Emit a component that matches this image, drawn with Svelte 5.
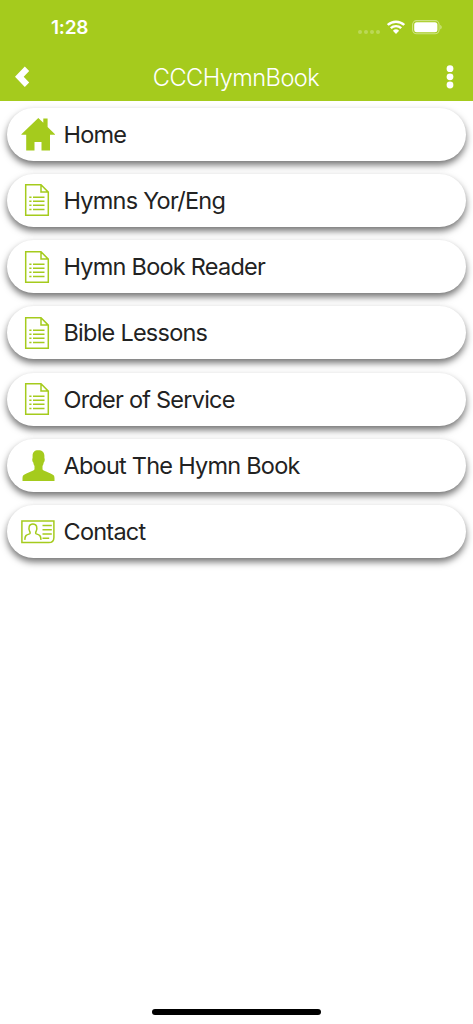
<script>
	const items = [
		{ label: 'Home', icon: 'home' },
		{ label: 'Hymns Yor/Eng', icon: 'paper' },
		{ label: 'Hymn Book Reader', icon: 'paper' },
		{ label: 'Bible Lessons', icon: 'paper' },
		{ label: 'Order of Service', icon: 'paper' },
		{ label: 'About The Hymn Book', icon: 'person' },
		{ label: 'Contact', icon: 'card' }
	];
</script>

<div class="screen">
	<header>
		<div class="status">
			<span class="time">1:28</span>
			<div class="indicators">
				<svg class="signal" width="22" height="16" viewBox="0 0 22 16">
					<circle cx="2" cy="12" r="2" />
					<circle cx="8" cy="12" r="2" />
					<circle cx="14" cy="12" r="2" />
					<circle cx="20" cy="12" r="2" />
				</svg>
				<svg class="wifi" width="18" height="16" viewBox="0 0 18 16">
					<path d="M.8 6a11.8 11.8 0 0 1 16.4 0M3.8 9.2a7.5 7.5 0 0 1 10.4 0" />
					<path class="solid" d="M5.9 11.7a4.5 4.5 0 0 1 6.2 0L9 14.9z" />
				</svg>
				<svg class="battery" width="30" height="16" viewBox="0 0 30 16">
					<rect class="shell" x=".6" y="1.6" width="26.5" height="13.2" rx="4" />
					<rect x="2.2" y="3.2" width="23.2" height="10" rx="2.5" />
					<path class="tip" d="M28.3 6c1.8.7 1.8 3.7 0 4.4z" />
				</svg>
			</div>
		</div>
		<nav>
			<button aria-label="Back">
				<svg width="15" height="22" viewBox="0 0 15 22">
					<path d="M9.800.5L14.200 4.900 8.700 10.700l5.500 5.800-4.400 4.400L0 10.700z" />
				</svg>
			</button>
			<h1>CCCHymnBook</h1>
			<button aria-label="More">
				<svg width="8" height="24" viewBox="0 0 8 24">
					<circle cx="4" cy="3.700" r="3.400" />
					<circle cx="4" cy="11.800" r="3.400" />
					<circle cx="4" cy="20" r="3.400" />
				</svg>
			</button>
		</nav>
	</header>

	<ul>
		{#each items as item}
			<li>
				<svg class="icon" width="34" height="34" viewBox="0 0 34 34">
					{#if item.icon === 'home'}
						<path d="M17.3 1L22.3 5.8V1.5h4.300v8.400L34 17.300v.5h-5V33.500h-8.500V25h-7v8.500H5.200V17.800H.4v-.5z" />
					{:else if item.icon === 'paper'}
						<path class="line" d="M4.7 1.8h15.300l7.300 7.300v23.200H4.700zM20 1.800v7.300h7.300" />
						<path class="line" d="M8.300 14.200h2.200m1.500 0h11.500M8.300 18.300h2.200m1.500 0h11.500M8.300 22.300h2.200m1.500 0h11.500M8.300 26.400h2.200m1.500 0h11.500" />
					{:else if item.icon === 'person'}
						<path d="M17.300 1.200c3.900 0 6.100 2 6.100 5.500v2.200c.7.700.3 4.100-.7 4.700-.3 1.800-.7 2.700-1.200 3.500v3c0 1.100 1.200 1.600 3 2.200l5.100 2.200c2.900 1.200 3.900 2.200 3.900 4.700V32H1.500v-2.800c0-2.500 1-3.500 3.900-4.700l5.100-2.200c1.800-.6 3-1.100 3-2.200v-3c-.5-.8-.9-1.700-1.200-3.500-1-.6-1.400-4-.7-4.700V6.700c0-3.500 1.800-5.500 5.700-5.500z" />
					{:else}
						<path class="line" d="M.9 6h32v16.400c0 3.300-1.900 5.200-5.200 5.200H.9z" />
						<path class="line" d="M3.800 24.900c.2-4.500 1.300-4.900 4.700-6 .8-.4.800-1.400.2-2.400C7.200 12.800 7.900 9 11.900 9s4.700 3.800 3.200 7.500c-.6 1-.6 2 .2 2.400 3.400 1.100 4.500 1.500 4.700 6" />
						<path class="line" d="M21.500 10.500h9.300M21.500 14.700h9.300M21.500 19h9.300M21.500 23.300h6.700" />
					{/if}
				</svg>
				<span>{item.label}</span>
			</li>
		{/each}
	</ul>

	<div class="home-bar"></div>
</div>

<style>
	:global(body) {
		margin: 0;
		background: #fff;
	}
	.screen {
		display: flex;
		flex-direction: column;
		box-sizing: border-box;
		width: 100%;
		height: 1024px;
		padding-bottom: 9px;
		font-family: Inter, 'Liberation Sans', sans-serif;
		color: #222;
	}
	header {
		height: 101px;
		background: #a5cb1d;
		color: #fff;
	}
	header svg {
		display: block;
		fill: #fff;
	}
	.status {
		display: flex;
		align-items: center;
		justify-content: space-between;
		height: 54px;
		padding: 0 31px 0 51px;
	}
	.time {
		font-size: 19px;
		font-weight: 600;
		letter-spacing: -0.2px;
	}
	.indicators {
		display: flex;
		gap: 7px;
	}
	.signal {
		opacity: 0.25;
		margin-top: 1px;
	}
	.wifi path {
		fill: none;
		stroke: #fff;
		stroke-width: 2.4;
	}
	.wifi .solid {
		fill: #fff;
		stroke: none;
	}
	.battery .shell {
		fill: none;
		stroke: #fff;
		stroke-width: 1.1;
		opacity: 0.45;
	}
	.battery .tip {
		opacity: 0.5;
	}
	nav {
		display: flex;
		align-items: center;
		justify-content: space-between;
		height: 46px;
		padding: 0 19px 0 15px;
	}
	button {
		padding: 0;
		border: 0;
		background: none;
	}
	h1 {
		margin: 0 4px 0 0;
		font-size: 23.6px;
		font-weight: 300;
		letter-spacing: -0.55px;
	}
	ul {
		display: flex;
		flex-direction: column;
		gap: 13.3px;
		margin: 0;
		padding: 6.6px 7px 0;
		list-style: none;
	}
	li {
		display: flex;
		align-items: center;
		box-sizing: border-box;
		height: 53px;
		padding-left: 14px;
		border-radius: 27px;
		background: #fff;
		box-shadow: 0 4px 7px rgba(0, 0, 0, 0.55);
		font-size: 23.5px;
	}
	li span {
		margin-left: 8.5px;
		letter-spacing: -0.76px;
	}
	.icon {
		fill: #a5cb1d;
	}
	.icon .line {
		fill: none;
		stroke: #a5cb1d;
		stroke-width: 1.5;
	}
	.home-bar {
		width: 169px;
		height: 6px;
		margin: auto auto 0;
		border-radius: 3px;
		background: #000;
	}
</style>
